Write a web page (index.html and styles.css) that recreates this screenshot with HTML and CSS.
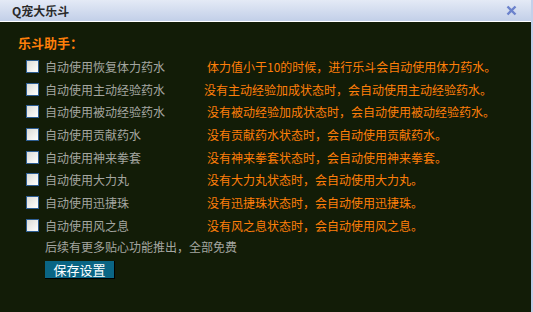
FILE: index.html
```html
<!DOCTYPE html>
<html lang="zh-CN">
<head>
  <meta charset="UTF-8">
  <title>Q宠大乐斗</title>
  <link rel="stylesheet" href="styles.css">
</head>
<body>
  <div class="dialog">
    <div class="titlebar">
      <span class="title">Q宠大乐斗</span>
      <span class="close">
        <svg width="11" height="11" viewBox="0 0 11 11"><path d="M1.5 1.5 L9.5 9.5 M9.5 1.5 L1.5 9.5" stroke="#6b82cc" stroke-width="2.4"/></svg>
      </span>
    </div>
    <div class="panel">
      <div class="heading">乐斗助手：</div>
      <ul class="options">
        <li><span class="check"></span><span class="label">自动使用恢复体力药水</span><span class="desc">体力值小于10的时候，进行乐斗会自动使用体力药水。</span></li>
        <li><span class="check"></span><span class="label">自动使用主动经验药水</span><span class="desc shift">没有主动经验加成状态时，会自动使用主动经验药水。</span></li>
        <li><span class="check"></span><span class="label">自动使用被动经验药水</span><span class="desc">没有被动经验加成状态时，会自动使用被动经验药水。</span></li>
        <li><span class="check"></span><span class="label">自动使用贡献药水</span><span class="desc">没有贡献药水状态时，会自动使用贡献药水。</span></li>
        <li><span class="check"></span><span class="label">自动使用神来拳套</span><span class="desc">没有神来拳套状态时，会自动使用神来拳套。</span></li>
        <li><span class="check"></span><span class="label">自动使用大力丸</span><span class="desc">没有大力丸状态时，会自动使用大力丸。</span></li>
        <li><span class="check"></span><span class="label">自动使用迅捷珠</span><span class="desc">没有迅捷珠状态时，会自动使用迅捷珠。</span></li>
        <li><span class="check"></span><span class="label">自动使用风之息</span><span class="desc">没有风之息状态时，会自动使用风之息。</span></li>
      </ul>
      <div class="note">后续有更多贴心功能推出，全部免费</div>
      <button class="save">保存设置</button>
    </div>
  </div>
</body>
</html>
```

FILE: styles.css
```css
body {
  margin: 0;
  font-family: "Noto Sans CJK SC", "DejaVu Sans", sans-serif;
  font-size: 12px;
  background-color: #121c07;
}
.dialog {
  width: 533px;
  height: 312px;
  display: flex;
  flex-direction: column;
  border-right: 2px solid #c3d0ea;
  box-sizing: border-box;
}
.titlebar {
  height: 21px;
  display: flex;
  align-items: center;
  justify-content: space-between;
  padding: 0 12px 0 12px;
  background: linear-gradient(#e4eaf6, #c2cfe8);
  border-bottom: 1px solid #ffffff;
}
.title {
  color: #2a2a2a;
  font-weight: bold;
  font-size: 12px;
}
.close {
  display: flex;
  margin-right: 2px;
}
.panel {
  flex: 1;
  background-color: #121c07;
  padding: 13px 0 0 18px;
}
.heading {
  color: #ff7f0a;
  font-weight: bold;
  font-size: 13px;
  line-height: 16px;
}
.options {
  list-style: none;
  margin: 4px 0 0 8px;
  padding: 0;
}
.options li {
  height: 22.7px;
  display: flex;
  align-items: center;
}
.check {
  width: 11px;
  height: 11px;
  border: 1px solid #2e5e92;
  background: linear-gradient(135deg, #dcdcd6, #ffffff);
  margin-right: 6px;
}
.label {
  color: #a4a6a0;
  width: 162px;
}
.desc {
  color: #ff7f0a;
}
.desc.shift {
  margin-left: -3px;
}
.note {
  color: #a4a6a0;
  margin: 0 0 0 27px;
  line-height: 20px;
}
.save {
  margin: 4px 0 0 27px;
  width: 70px;
  height: 18px;
  padding: 0;
  border: none;
  border-right: 1px solid #000000;
  border-bottom: 1px solid #000000;
  background-color: #0a6584;
  color: #ffffff;
  font-family: "Noto Sans CJK SC", sans-serif;
  font-size: 13px;
  line-height: 17px;
}
```
